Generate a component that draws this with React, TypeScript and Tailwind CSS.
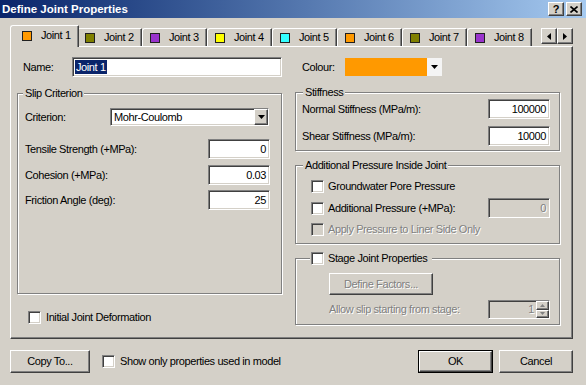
import React from "react";

const sunken =
  "border border-t-[#808080] border-l-[#808080] border-b-white border-r-white shadow-[inset_1px_1px_0_#404040,inset_-1px_-1px_0_#d4d0c8]";
const raised =
  "border border-t-white border-l-white border-b-[#404040] border-r-[#404040] shadow-[inset_-1px_-1px_0_#808080]";
const etched = "border border-[#808080] shadow-[1px_1px_0_#fff,inset_1px_1px_0_#fff]";
const disabledText = "text-[#808080] [text-shadow:1px_1px_0_#fff]";

function DownTri({ color = "#000" }: { color?: string }) {
  return (
    <svg width="7" height="4" viewBox="0 0 7 4">
      <path d="M0 0H7L3.5 4Z" fill={color} />
    </svg>
  );
}

function CheckBox({ disabled = false }: { disabled?: boolean }) {
  return <div className={`${sunken} w-[13px] h-[13px] shrink-0 ${disabled ? "bg-[#d4d0c8]" : "bg-white"}`} />;
}

function Input({ value, disabled = false }: { value: string; disabled?: boolean }) {
  return (
    <div
      className={`${sunken} w-[62px] h-[20px] flex items-center justify-end pr-[3px] ${
        disabled ? "bg-[#d4d0c8] " + disabledText : "bg-white"
      }`}
    >
      {value}
    </div>
  );
}

function Tab({ label, color, selected }: { label: string; color: string; selected?: boolean }) {
  const base =
    "flex items-center gap-[9px] border-t border-l border-r border-t-white border-l-white border-r-[#404040] shadow-[inset_-1px_0_0_#808080] rounded-tl-[3px] rounded-tr-[1px] bg-[#d4d0c8]";
  return (
    <div
      className={`${base} ${
        selected ? "relative z-10 w-[69px] h-[22px] -mx-[2px] -mb-[1px] pl-[11px] pb-[2px]" : "w-[65px] h-[18px] pl-[7px]"
      }`}
    >
      <div className="w-[10px] h-[10px] border border-[#202020]" style={{ backgroundColor: color }} />
      <span>{label}</span>
    </div>
  );
}

function Legend({ children, className = "" }: { children: React.ReactNode; className?: string }) {
  return (
    <div className={`self-start -mt-[7px] h-[13px] leading-[13px] bg-[#d4d0c8] flex items-center ${className}`}>{children}</div>
  );
}

export default function App() {
  const tabs = [
    { label: "Joint 1", color: "#ff9900" },
    { label: "Joint 2", color: "#808000" },
    { label: "Joint 3", color: "#9933cc" },
    { label: "Joint 4", color: "#ffff00" },
    { label: "Joint 5", color: "#33ffff" },
    { label: "Joint 6", color: "#ff9900" },
    { label: "Joint 7", color: "#808000" },
    { label: "Joint 8", color: "#9933cc" },
  ];
  return (
    <div className="w-[586px] h-[385px] bg-[#d4d0c8] text-black font-['Liberation_Sans',Arial,sans-serif] text-[11px] tracking-[-0.4px] leading-[13px] flex flex-col overflow-hidden select-none">
      {/* Title bar */}
      <div className="h-[18px] flex items-center bg-gradient-to-r from-[#0a246a] to-[#a6caf0] pl-[2px] pr-[4px]">
        <span className="text-white font-bold text-[11.5px] tracking-[0px]">Define Joint Properties</span>
        <div className="ml-auto flex gap-[2px]">
          <div className={`${raised} w-[16px] h-[14px] bg-[#d4d0c8] flex items-center justify-center font-bold text-[11px] leading-[11px]`}>
            ?
          </div>
          <div className={`${raised} w-[16px] h-[14px] bg-[#d4d0c8] flex items-center justify-center`}>
            <svg width="8" height="7" viewBox="0 0 8 7">
              <path d="M0.5 0.5L7.5 6.5M7.5 0.5L0.5 6.5" stroke="#000" strokeWidth="1.6" />
            </svg>
          </div>
        </div>
      </div>

      {/* Tabs */}
      <div className="mt-[7px] flex items-end pl-[12px] pr-[13px]">
        {tabs.map((t, i) => (
          <Tab key={i} label={t.label} color={t.color} selected={i === 0} />
        ))}
        <div className="ml-auto mb-[2px] flex">
          <div className={`${raised} w-[16px] h-[16px] bg-[#d4d0c8] flex items-center justify-center`}>
            <svg width="4" height="7" viewBox="0 0 4 7">
              <path d="M4 0V7L0 3.5Z" fill="#000" />
            </svg>
          </div>
          <div className={`${raised} w-[16px] h-[16px] bg-[#d4d0c8] flex items-center justify-center`}>
            <svg width="4" height="7" viewBox="0 0 4 7">
              <path d="M0 0V7L4 3.5Z" fill="#000" />
            </svg>
          </div>
        </div>
      </div>

      {/* Panel */}
      <div className="ml-[10px] mr-[13px] h-[293px] border-t border-l border-r border-b border-t-white border-l-white border-r-[#404040] border-b-[#404040] shadow-[inset_-1px_-1px_0_#808080] flex pl-[6px] pt-[10px] gap-[13px]">
        {/* Left column */}
        <div className="w-[265px] flex flex-col">
          <div className="h-[20px] flex items-center">
            <span className="ml-[6px] w-[49px]">Name:</span>
            <div className={`${sunken} w-[210px] h-[20px] bg-white flex items-center pl-[2px]`}>
              <span className="bg-[#0a246a] text-white px-[1px] leading-[14px]">Joint 1</span>
            </div>
          </div>

          <div className={`${etched} mt-[16px] h-[201px] flex flex-col pl-[7px] pr-[11px]`}>
            <Legend className="-ml-[2px] px-[2px]">Slip Criterion</Legend>
            <div className="mt-[8px] h-[18px] flex items-center">
              <span className="w-[85px]">Criterion:</span>
              <div className={`${sunken} w-[159px] h-[18px] bg-white flex items-center pl-[3px]`}>
                <span>Mohr-Coulomb</span>
                <div className={`${raised} ml-auto w-[14px] h-full bg-[#d4d0c8] flex items-center justify-center`}>
                  <DownTri />
                </div>
              </div>
            </div>
            <div className="mt-[13px] h-[20px] flex items-center justify-between">
              <span>Tensile Strength (+MPa):</span>
              <Input value="0" />
            </div>
            <div className="mt-[6px] h-[20px] flex items-center justify-between">
              <span>Cohesion (+MPa):</span>
              <Input value="0.03" />
            </div>
            <div className="mt-[5px] h-[20px] flex items-center justify-between">
              <span>Friction Angle (deg):</span>
              <Input value="25" />
            </div>
          </div>

          <div className="mt-[17px] ml-[11px] flex items-center gap-[5px]">
            <CheckBox />
            <span>Initial Joint Deformation</span>
          </div>
        </div>

        {/* Right column */}
        <div className="w-[265px] flex flex-col">
          <div className="mt-[1px] h-[18px] flex items-center">
            <span className="ml-[7px] w-[43px]">Colour:</span>
            <div className="w-[82px] h-[18px] bg-[#ff9900]" />
            <div className="w-[15px] h-[18px] bg-[#f4f4f4] flex items-center justify-center">
              <DownTri />
            </div>
          </div>

          <div className={`${etched} mt-[16px] h-[59px] flex flex-col pl-[6px] pr-[9px]`}>
            <Legend className="ml-[1px] px-[2px]">Stiffness</Legend>
            <div className="h-[20px] flex items-center justify-between">
              <span>Normal Stiffness (MPa/m):</span>
              <Input value="100000" />
            </div>
            <div className="mt-[7px] h-[20px] flex items-center justify-between">
              <span>Shear Stiffness (MPa/m):</span>
              <Input value="10000" />
            </div>
          </div>

          <div className={`${etched} mt-[14px] h-[79px] flex flex-col pl-[6px] pr-[9px]`}>
            <Legend className="ml-[1px] px-[2px]">Additional Pressure Inside Joint</Legend>
            <div className="mt-[8px] ml-[9px] flex items-center gap-[4px]">
              <CheckBox />
              <span>Groundwater Pore Pressure</span>
            </div>
            <div className="mt-[5px] h-[20px] flex items-center">
              <div className="ml-[9px] flex items-center gap-[4px]">
                <CheckBox />
                <span>Additional Pressure (+MPa):</span>
              </div>
              <div className="ml-auto">
                <Input value="0" disabled />
              </div>
            </div>
            <div className="mt-[5px] ml-[9px] flex items-center gap-[4px]">
              <CheckBox disabled />
              <span className={disabledText}>Apply Pressure to Liner Side Only</span>
            </div>
          </div>

          <div className={`${etched} mt-[14px] h-[67px] flex flex-col pl-[6px] pr-[9px]`}>
            <Legend className="ml-[8px] pl-[1px] pr-[5px] gap-[4px]">
              <CheckBox />
              <span>Stage Joint Properties</span>
            </Legend>
            <div
              className={`${raised} mt-[8px] ml-[27px] w-[104px] h-[22px] flex items-center justify-center ${disabledText}`}
            >
              Define Factors...
            </div>
            <div className="mt-[5px] h-[19px] flex items-center">
              <span className={`ml-[27px] ${disabledText}`}>Allow slip starting from stage:</span>
              <div className={`${sunken} ml-auto w-[62px] h-[19px] bg-[#d4d0c8] flex items-center justify-end`}>
                <span className={`${disabledText} mr-[2px]`}>1</span>
                <div className="w-[13px] h-full flex flex-col">
                  <div className={`${raised} flex-1 flex items-center justify-center`}>
                    <svg width="5" height="3" viewBox="0 0 5 3">
                      <path d="M0 3H5L2.5 0Z" fill="#808080" />
                    </svg>
                  </div>
                  <div className={`${raised} flex-1 flex items-center justify-center`}>
                    <svg width="5" height="3" viewBox="0 0 5 3">
                      <path d="M0 0H5L2.5 3Z" fill="#808080" />
                    </svg>
                  </div>
                </div>
              </div>
            </div>
          </div>
        </div>
      </div>

      {/* Bottom buttons */}
      <div className="mt-[11px] flex items-center pl-[10px] pr-[13px]">
        <div className={`${raised} w-[80px] h-[23px] flex items-center justify-center`}>Copy To...</div>
        <div className="ml-[12px] flex items-center gap-[5px]">
          <CheckBox />
          <span>Show only properties used in model</span>
        </div>
        <div className="ml-auto w-[75px] h-[23px] border border-black">
          <div className={`${raised} w-full h-full flex items-center justify-center`}>OK</div>
        </div>
        <div className={`${raised} ml-[6px] w-[74px] h-[23px] flex items-center justify-center`}>Cancel</div>
      </div>
    </div>
  );
}
